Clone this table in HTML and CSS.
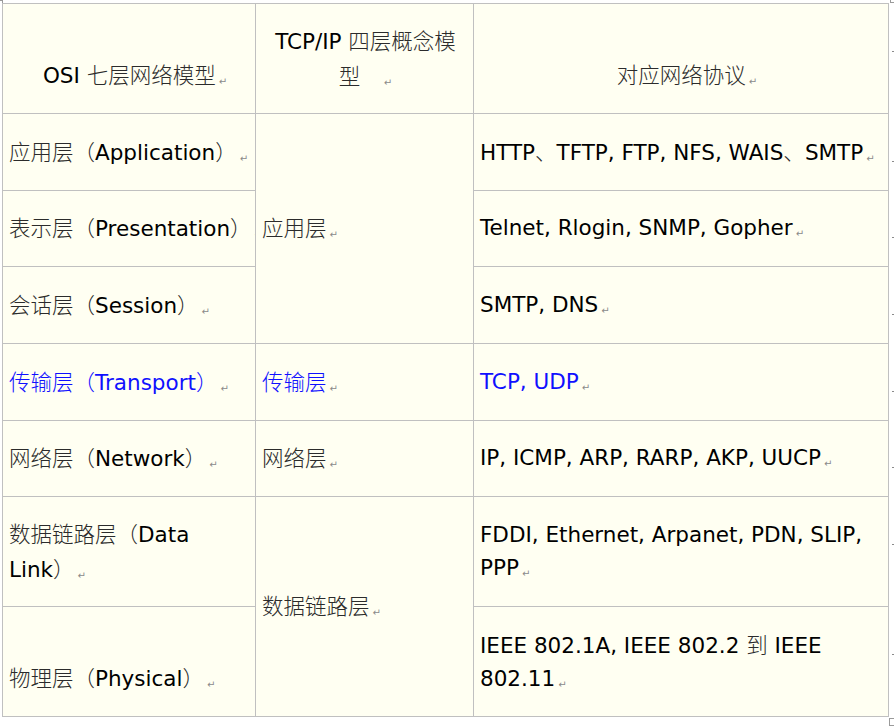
FILE: index.html
```html
<!DOCTYPE html>
<html lang="zh-CN">
<head>
<meta charset="utf-8">
<title>OSI 与 TCP/IP</title>
<link rel="stylesheet" href="styles.css">
</head>
<body>
<div class="page">
<span class="mark mark-tl"></span>
<span class="mark mark-tr"></span>
<span class="mark mark-br"></span>
<table class="grid">
  <colgroup>
    <col class="w1"><col class="w2"><col class="w3"><col class="w4">
  </colgroup>
  <tr class="h-head">
    <td class="center shift">&nbsp;<br>OSI <span class="zh">七层网络模型</span><span class="pm">↵</span></td>
    <td class="center">TCP/IP <span class="zh">四层概念模</span><br><span class="zh">型</span>&nbsp;&nbsp;&nbsp;<span class="pm">↵</span></td>
    <td class="center shift">&nbsp;<br><span class="zh">对应网络协议</span><span class="pm">↵</span></td>
    <td class="end"><span class="em"></span><br>&nbsp;</td>
  </tr>
  <tr class="h-a">
    <td><span class="zh">应用层（</span>Application<span class="zh">）</span><span class="pm">↵</span></td>
    <td rowspan="3"><span class="zh">应用层</span><span class="pm">↵</span></td>
    <td>HTTP<span class="zh">、</span>TFTP, FTP, NFS, WAIS<span class="zh">、</span>SMTP<span class="pm">↵</span></td>
    <td class="end"><span class="em"></span></td>
  </tr>
  <tr class="h-b">
    <td class="clip"><span class="zh">表示层（</span>Presentation<span class="zh">）</span><span class="pm">↵</span></td>
    <td>Telnet, Rlogin, SNMP, Gopher<span class="pm">↵</span></td>
    <td class="end"><span class="em"></span></td>
  </tr>
  <tr class="h-a">
    <td><span class="zh">会话层（</span>Session<span class="zh">）</span><span class="pm">↵</span></td>
    <td>SMTP, DNS<span class="pm">↵</span></td>
    <td class="end"><span class="em"></span></td>
  </tr>
  <tr class="h-a blue">
    <td><span class="zh">传输层（</span>Transport<span class="zh">）</span><span class="pm">↵</span></td>
    <td><span class="zh">传输层</span><span class="pm">↵</span></td>
    <td>TCP, UDP<span class="pm">↵</span></td>
    <td class="end"><span class="em"></span></td>
  </tr>
  <tr class="h-b">
    <td><span class="zh">网络层（</span>Network<span class="zh">）</span><span class="pm">↵</span></td>
    <td><span class="zh">网络层</span><span class="pm">↵</span></td>
    <td>IP, ICMP, ARP, RARP, AKP, UUCP<span class="pm">↵</span></td>
    <td class="end"><span class="em"></span></td>
  </tr>
  <tr class="h-head">
    <td><span class="zh">数据链路层（</span>Data<br>Link<span class="zh">）</span><span class="pm">↵</span></td>
    <td rowspan="2"><span class="zh">数据链路层</span><span class="pm">↵</span></td>
    <td>FDDI, Ethernet, Arpanet, PDN, SLIP,<br>PPP<span class="pm">↵</span></td>
    <td class="end"><span class="em"></span><br>&nbsp;</td>
  </tr>
  <tr class="h-head">
    <td>&nbsp;<br><span class="zh">物理层（</span>Physical<span class="zh">）</span><span class="pm">↵</span></td>
    <td>IEEE 802.1A, IEEE 802.2 <span class="zh">到</span> IEEE<br>802.11<span class="pm">↵</span></td>
    <td class="end"><span class="em"></span><br>&nbsp;</td>
  </tr>
</table>
</div>
</body>
</html>
```
FILE: styles.css
```css
html, body {
  margin: 0;
  padding: 0;
  background: #ffffff;
}

.page {
  position: relative;
  padding: 3px 0 0 2px;
  width: 892px;
  height: 724px;
}

.grid {
  border-collapse: collapse;
  table-layout: fixed;
  width: 892px;
  font-family: "DejaVu Sans", "Noto Sans CJK SC", sans-serif;
  font-size: 21.5px;
  line-height: 33px;
  color: #000000;
}

.w1 { width: 253px; }
.w2 { width: 218px; }
.w3 { width: 415px; }
.w4 { width: 6px; }

.grid td {
  border: 1px solid #c0c0c0;
  background: #fffff2;
  padding: 4px 4px 0 6px;
  vertical-align: middle;
  white-space: nowrap;
  overflow: hidden;
}

.grid td.center {
  text-align: center;
}

.grid td.shift {
  padding-left: 16px;
}

.grid td.end {
  border: none;
  background: transparent;
  padding: 4px 0 0 3px;
  overflow: visible;
}

.h-head { height: 110px; }
.h-a { height: 77px; }
.h-b { height: 76px; }

.zh {
  font-family: "Noto Sans CJK SC", sans-serif;
  font-weight: 300;
  color: #2b2b2b;
}

.blue td,
.blue .zh {
  color: #1010ff;
}

.pm {
  font-family: "DejaVu Sans", sans-serif;
  font-size: 10px;
  color: #8a8a8a;
  margin-left: 3px;
  vertical-align: -2px;
}

.em {
  display: inline-block;
  width: 3px;
  height: 1px;
  background: #8a8a8a;
  vertical-align: baseline;
}

.mark {
  position: absolute;
  border-color: #9a9a9a;
  border-style: solid;
  border-width: 0;
}

.mark-tl {
  left: 0;
  top: 0;
  width: 2px;
  height: 2px;
  border-top-width: 1px;
  border-right-width: 1px;
}

.mark-tr {
  left: 890px;
  top: 0;
  width: 4px;
  height: 2px;
  border-left-width: 1px;
  border-bottom-width: 1px;
}

.mark-br {
  left: 889px;
  top: 718px;
  width: 4px;
  height: 6px;
  border-width: 1px;
}
```
